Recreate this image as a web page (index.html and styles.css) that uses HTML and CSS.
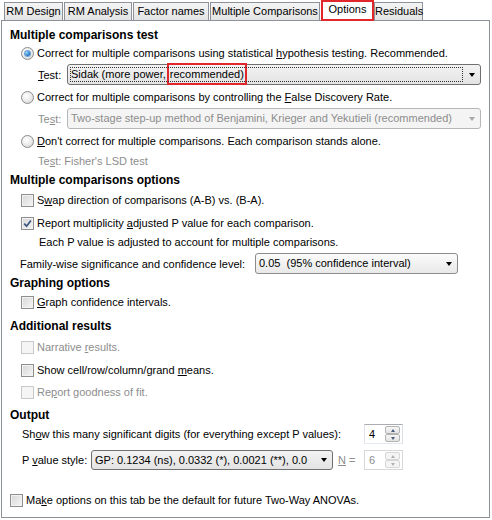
FILE: index.html
```html
<!DOCTYPE html>
<html>
<head>
  <meta charset="UTF-8" />
  <title>Two-way ANOVA - Options</title>

<link rel="stylesheet" href="styles.css">

</head>
<body>

<div class="dialog">
  <div class="tabs">
    <div class="tab">RM Design</div>
    <div class="tab">RM Analysis</div>
    <div class="tab">Factor names</div>
    <div class="tab">Multiple Comparisons</div>
    <div class="tab active">Options</div>
    <div class="tab">Residuals</div>
  </div>

  <div class="panel">
    <!-- multiple comparisons test -->
    <div class="heading">Multiple comparisons test</div>
    <div class="option"><span class="radio checked"></span><span>Correct for multiple comparisons using statistical <u>h</u>ypothesis testing. Recommended.</span></div>
    <div class="test-row sp2">
      <span class="test-label"><u>T</u>est:</span>
      <div class="combo">
        <span class="combo-text focus">Sidak (more power, <span class="mark">recommended)</span></span>
        <span class="arrow-box"><span class="arrow"></span></span>
      </div>
    </div>
    <div class="option sp3"><span class="radio"></span><span>Correct for multiple comparisons by controlling the <u>F</u>alse Discovery Rate.</span></div>
    <div class="test-row sp2 muted">
      <span class="test-label">Te<u>s</u>t:</span>
      <div class="combo disabled">
        <span class="combo-text">Two-stage step-up method of Benjamini, Krieger and Yekutieli (recommended)</span>
        <span class="arrow-box"><span class="arrow"></span></span>
      </div>
    </div>
    <div class="option sp3"><span class="radio"></span><span><u>D</u>on't correct for multiple comparisons. Each comparison stands alone.</span></div>
    <div class="line test-line sp2 muted"><span>Te<u>s</u>t: Fisher's LSD test</span></div>

    <!-- multiple comparisons options -->
    <div class="heading sp1">Multiple comparisons options</div>
    <div class="option sp2"><span class="check"></span><span>S<u>w</u>ap direction of comparisons (A-B) vs. (B-A).</span></div>
    <div class="option sp5">
      <span class="check">
        <svg viewBox="0 0 11 11" width="11" height="11"><path d="M2.2 5.6 L4.6 8.2 L8.9 2.4" fill="none" stroke="#3c5683" stroke-width="1.7"/></svg>
      </span>
      <span>Report multiplicity <u>a</u>djusted P value for each comparison.</span>
    </div>
    <div class="line note sp1">Each P value is adjusted to account for multiple comparisons.</div>
    <div class="family-row sp2">
      <span class="family-label">Family-wise significance and confidence level:</span>
      <div class="combo light family-combo">
        <span class="combo-text">0.05&nbsp; (95% confidence interval)</span>
        <span class="arrow-box"><span class="arrow"></span></span>
      </div>
    </div>

    <!-- graphing options -->
    <div class="heading">Graphing options</div>
    <div class="option sp1"><span class="check"></span><span><u>G</u>raph confidence intervals.</span></div>

    <!-- additional results -->
    <div class="heading sp6">Additional results</div>
    <div class="option sp3 muted"><span class="check disabled"></span><span>Narrative <u>r</u>esults.</span></div>
    <div class="option sp5"><span class="check"></span><span>Show cell/row/column/grand <u>m</u>eans.</span></div>
    <div class="option sp4 muted"><span class="check disabled"></span><span>Re<u>p</u>ort goodness of fit.</span></div>

    <!-- output -->
    <div class="heading sp5">Output</div>
    <div class="digits-row">
      <span class="digits-label">Sh<u>o</u>w this many significant digits (for everything except P values):</span>
      <div class="spin">
        <span class="spin-value">4</span>
        <span class="spin-buttons">
          <span class="spin-btn"><span class="tri up"></span></span>
          <span class="spin-btn"><span class="tri down"></span></span>
        </span>
      </div>
    </div>
    <div class="pvalue-row sp6">
      <span class="pvalue-label">P <u>v</u>alue style:</span>
      <div class="combo pvalue-combo">
        <span class="combo-text clip">GP: 0.1234 (ns), 0.0332 (*), 0.0021 (**), 0.0</span>
        <span class="arrow-box"><span class="arrow"></span></span>
      </div>
      <span class="n-label muted"><u>N</u> =</span>
      <div class="spin disabled">
        <span class="spin-value">6</span>
        <span class="spin-buttons">
          <span class="spin-btn"><span class="tri up"></span></span>
          <span class="spin-btn"><span class="tri down"></span></span>
        </span>
      </div>
    </div>

    <div class="option footer-option"><span class="check"></span><span>Ma<u>k</u>e options on this tab be the default for future Two-Way ANOVAs.</span></div>
  </div>
</div>

</body>
</html>
```

FILE: styles.css
```css
body {
  margin: 0;
  background: #fff;
  font-family: "Liberation Sans", Arial, sans-serif;
  font-size: 11px;
  color: #000;
}

u {
  text-underline-offset: 1px;
}

.dialog {
  padding-left: 1px;
}

/* tab strip */
.tabs {
  display: grid;
  grid-template-columns: 60px 69px 77px 111px 53px 50px;
  align-items: end;
  height: 20px;
  padding-left: 3px;
}

.tab {
  height: 18px;
  box-sizing: border-box;
  margin-right: 1px;
  border: 1px solid #8d9199;
  border-bottom: none;
  background: linear-gradient(#f4f4f4, #e4e4e4);
  text-align: center;
  line-height: 17px;
  white-space: nowrap;
}

.tab.active {
  position: relative;
  z-index: 1;
  height: 21px;
  margin: 0 0 -1px 0;
  border: 2px solid #e1262c;
  background: #fff;
  line-height: 15px;
}

.panel {
  width: 489px;
  height: 498px;
  box-sizing: border-box;
  border: 1px solid #8d9199;
  padding-top: 5px;
}

/* spacing between rows */
.sp1 { margin-top: 1px; }
.sp2 { margin-top: 2px; }
.sp3 { margin-top: 3px; }
.sp4 { margin-top: 4px; }
.sp5 { margin-top: 5px; }
.sp6 { margin-top: 6px; }

.muted {
  color: #8d8d8d;
}

.heading {
  display: flex;
  align-items: center;
  height: 18px;
  padding-left: 8px;
  font-size: 12px;
  font-weight: bold;
}

.line {
  display: flex;
  align-items: center;
  height: 18px;
  white-space: nowrap;
}

.test-line { padding-left: 36px; }
.note { padding-left: 37px; }

.option {
  display: flex;
  align-items: center;
  gap: 3px;
  height: 18px;
  padding-left: 19px;
  white-space: nowrap;
}

.footer-option {
  margin-top: 21px;
  padding-left: 8px;
}

/* radio buttons and check boxes */
.radio {
  display: flex;
  align-items: center;
  justify-content: center;
  flex: none;
  width: 13px;
  height: 13px;
  box-sizing: border-box;
  border: 1px solid #8a8c8e;
  border-radius: 50%;
  background: radial-gradient(circle at 40% 35%, #ffffff 0, #ededed 45%, #d0d0d0 100%);
}

.radio.checked::after {
  content: "";
  width: 5px;
  height: 5px;
  border-radius: 50%;
  background: radial-gradient(circle at 35% 35%, #a9dcff 0, #2c7fd0 55%, #0d4c8f 100%);
  box-shadow: 0 0 0 1px #6da4d6;
}

.check {
  display: flex;
  align-items: center;
  justify-content: center;
  flex: none;
  width: 13px;
  height: 13px;
  box-sizing: border-box;
  border: 1px solid #8f8f8f;
  background: linear-gradient(135deg, #d6d6d6, #f6f6f6);
  box-shadow: inset 0 0 0 1px #f2f2f2;
}

.check.disabled {
  border-color: #c9c9c9;
  background: #f5f5f5;
  box-shadow: none;
}

/* combo boxes */
.test-row {
  display: flex;
  align-items: center;
  height: 21px;
  padding-left: 36px;
  padding-right: 8px;
}

.test-label {
  flex: 0 0 29px;
}

.combo {
  display: flex;
  align-items: center;
  flex: 1;
  min-width: 0;
  height: 21px;
  box-sizing: border-box;
  border: 1px solid #707070;
  border-radius: 3px;
  background: linear-gradient(#f3f3f3, #e3e3e3);
  white-space: nowrap;
}

.combo.light {
  border-color: #8c8c8c;
  background: linear-gradient(#fbfbfb, #e9e9e9);
}

.combo.disabled {
  border-color: #b4b7ba;
  background: #f4f4f4;
}

.combo-text {
  flex: 1;
  min-width: 0;
  height: 15px;
  margin-left: 2px;
  padding-left: 1px;
  line-height: 15px;
}

.combo-text.focus {
  outline: 1px dotted #333;
  outline-offset: -1px;
}

.combo-text.clip {
  overflow: hidden;
}

.mark {
  padding: 3px 1px;
  outline: 2px solid #e1262c;
}

.arrow-box {
  display: flex;
  justify-content: center;
  flex: 0 0 17px;
}

.arrow {
  width: 0;
  height: 0;
  border-left: 3.5px solid transparent;
  border-right: 3.5px solid transparent;
  border-top: 4px solid #000;
}

.combo.disabled .arrow {
  border-top-color: #a8a8a8;
}

.family-row {
  display: flex;
  align-items: center;
  height: 21px;
  padding-left: 18px;
}

.family-label {
  flex: 0 0 235px;
}

.family-combo {
  flex: 0 0 203px;
}

/* output rows */
.digits-row,
.pvalue-row {
  display: flex;
  align-items: center;
  height: 20px;
  padding-left: 20px;
  white-space: nowrap;
}

.digits-label {
  flex: 0 0 342px;
}

.pvalue-label {
  flex: 0 0 69px;
}

.pvalue-combo {
  flex: 0 0 242px;
  height: 20px;
}

.n-label {
  flex: 0 0 26px;
  margin-left: 5px;
}

.spin {
  display: flex;
  flex: none;
  width: 39px;
  height: 20px;
  box-sizing: border-box;
  padding: 1px 2px 1px 1px;
  border: 1px solid;
  border-color: #abadb3 #dbdfe6 #e3e9ef #e2e3ea;
  background: #fff;
}

.spin-value {
  flex: 1;
  padding-left: 3px;
  line-height: 16px;
}

.spin-buttons {
  display: flex;
  flex-direction: column;
  width: 15px;
}

.spin-btn {
  display: flex;
  align-items: center;
  justify-content: center;
  flex: 1;
  border: 1px solid #b4b4b4;
  border-radius: 2px;
  background: linear-gradient(#f7f7f7, #e3e3e3);
}

.tri {
  width: 0;
  height: 0;
  border-left: 2.5px solid transparent;
  border-right: 2.5px solid transparent;
}

.tri.up { border-bottom: 3px solid #4a5d80; }
.tri.down { border-top: 3px solid #4a5d80; }

.spin.disabled {
  border-color: #d6d6d6;
  color: #8d8d8d;
}

.spin.disabled .spin-btn {
  border-color: #d6d6d6;
  background: #f4f4f4;
}

.spin.disabled .tri.up { border-bottom-color: #b0b0b0; }
.spin.disabled .tri.down { border-top-color: #b0b0b0; }
```
